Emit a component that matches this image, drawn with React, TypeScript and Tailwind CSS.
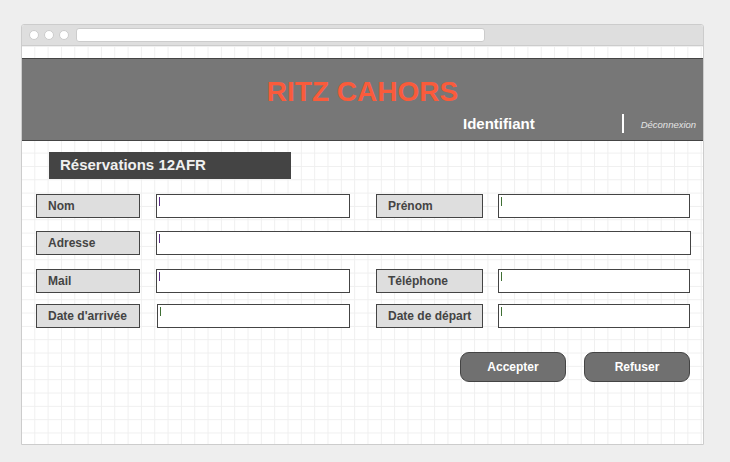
import React from 'react'

const FONT = "font-['Liberation_Sans',Arial,sans-serif]"

function Label({ text, w }: { text: string; w: string }) {
  return (
    <div
      className={`${w} h-[24px] flex items-center pl-[11px] bg-[#dedede] border border-[#444] text-[12px] font-bold text-[#444] whitespace-nowrap`}
    >
      {text}
    </div>
  )
}

function Field({ w, caret }: { w: string; caret: string }) {
  return (
    <div className={`${w} h-[24px] bg-white border border-[#444] relative`}>
      <span className={`absolute left-[2px] top-[2px] w-px h-[9px] ${caret}`} />
    </div>
  )
}

export default function App() {
  return (
    <div className={`w-[730px] h-[462px] bg-[#eeeeee] pt-[24px] pl-[21px] ${FONT}`}>
      <div className="w-[683px] h-[421px] border border-[#cccccc] rounded-t-[3px] flex flex-col bg-white overflow-hidden">
        {/* browser chrome */}
        <div className="h-[21px] bg-[#dedede] border-b border-[#cccccc] flex items-center pl-[7px] gap-[5px]">
          <span className="w-[10px] h-[10px] rounded-full bg-white border border-[#cccccc]" />
          <span className="w-[10px] h-[10px] rounded-full bg-white border border-[#cccccc]" />
          <span className="w-[10px] h-[10px] rounded-full bg-white border border-[#cccccc]" />
          <span className="ml-[2px] w-[409px] h-[14px] rounded-[3px] bg-white border border-[#cccccc]" />
        </div>

        {/* page */}
        <div className="flex-1 pt-[12px] bg-white bg-[linear-gradient(to_right,#efefef_1px,transparent_1px),linear-gradient(to_bottom,#efefef_1px,transparent_1px)] bg-[size:13.333px_13.333px] bg-[position:12.3px_0px]">
          {/* header */}
          <div className="h-[83px] bg-[#777777] border border-[#444] -mx-px flex flex-col">
            <div className="pt-[19px] text-center text-[28px] leading-[28px] font-bold text-[#fa5b3b]">
              RITZ CAHORS
            </div>
            <div className="mt-[8px] flex items-center h-[19px]">
              <span className="ml-[441px] text-[15px] font-bold text-white leading-none">Identifiant</span>
              <span className="ml-[87px] w-[2px] h-[19px] bg-white" />
              <span className="ml-[17px] text-[9.5px] italic text-[#e4e4e4] leading-none pt-[3px]">
                Déconnexion
              </span>
            </div>
          </div>

          {/* section title */}
          <div className="mt-[11px] ml-[27px] w-[242px] h-[27px] bg-[#444444] flex items-center pl-[11px] text-[15px] font-bold text-[#f0f0f0]">
            Réservations 12AFR
          </div>

          {/* form */}
          <div className="mt-[15px] ml-[14px] flex flex-col">
            <div className="flex items-center">
              <Label text="Nom" w="w-[104px]" />
              <div className="ml-[16px]"><Field w="w-[194px]" caret="bg-[#5b2d86]" /></div>
              <div className="ml-[26px]"><Label text="Prénom" w="w-[107px]" /></div>
              <div className="ml-[15px]"><Field w="w-[192px]" caret="bg-[#3f6f34]" /></div>
            </div>
            <div className="mt-[13px] flex items-center">
              <Label text="Adresse" w="w-[104px]" />
              <div className="ml-[16px]"><Field w="w-[535px]" caret="bg-[#5b2d86]" /></div>
            </div>
            <div className="mt-[14px] flex items-center">
              <Label text="Mail" w="w-[104px]" />
              <div className="ml-[16px]"><Field w="w-[194px]" caret="bg-[#5b2d86]" /></div>
              <div className="ml-[26px]"><Label text="Téléphone" w="w-[107px]" /></div>
              <div className="ml-[15px]"><Field w="w-[192px]" caret="bg-[#3f6f34]" /></div>
            </div>
            <div className="mt-[11px] flex items-center">
              <Label text="Date d'arrivée" w="w-[104px]" />
              <div className="ml-[17px]"><Field w="w-[193px]" caret="bg-[#3f6f34]" /></div>
              <div className="ml-[26px]"><Label text="Date de départ" w="w-[107px]" /></div>
              <div className="ml-[15px]"><Field w="w-[192px]" caret="bg-[#3f6f34]" /></div>
            </div>
          </div>

          {/* actions */}
          <div className="mt-[24px] pr-[13px] flex justify-end gap-[18px]">
            <button className="w-[106px] h-[30px] rounded-[9px] bg-[#707070] border border-[#444] text-[12px] font-bold text-white">
              Accepter
            </button>
            <button className="w-[106px] h-[30px] rounded-[9px] bg-[#707070] border border-[#444] text-[12px] font-bold text-white">
              Refuser
            </button>
          </div>
        </div>
      </div>
    </div>
  )
}
